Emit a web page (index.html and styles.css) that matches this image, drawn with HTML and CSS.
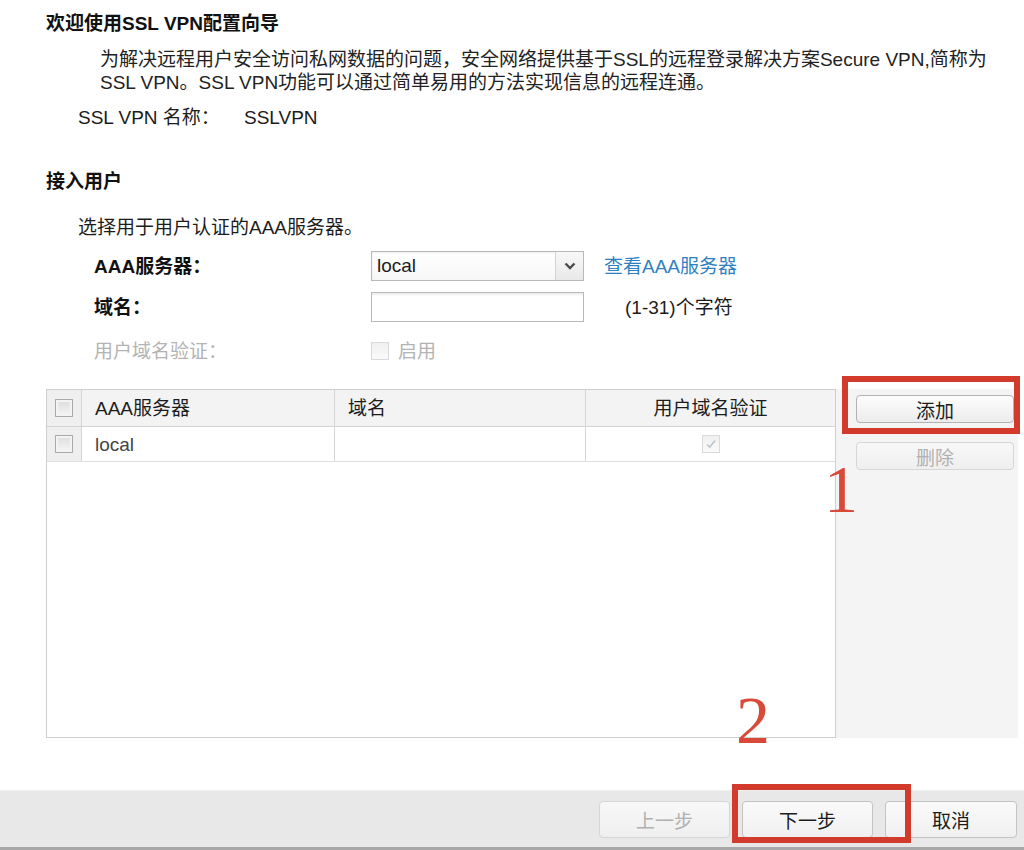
FILE: index.html
```html
<!DOCTYPE html>
<html lang="zh-CN">

<head>
  <meta charset="UTF-8" />
  <meta name="viewport" content="width=device-width, initial-scale=1.0" />
  <title>SSL VPN配置向导</title>
  <link rel="stylesheet" href="styles.css">
</head>

<body>
  <div class="wizard">
    <div class="content">
      <h2 class="heading">欢迎使用SSL VPN配置向导</h2>
      <p class="intro">为解决远程用户安全访问私网数据的问题，安全网络提供基于SSL的远程登录解决方案Secure VPN,简称为<br>SSL VPN。SSL VPN功能可以通过简单易用的方法实现信息的远程连通。</p>
      <div class="name-row">
        <span class="name-label">SSL VPN 名称：</span>
        <span>SSLVPN</span>
      </div>

      <h2 class="heading section">接入用户</h2>
      <p class="hint">选择用于用户认证的AAA服务器。</p>

      <div class="form">
        <label class="form-label">AAA服务器：</label>
        <div class="select">
          <span class="select-value">local</span>
          <span class="select-arrow">
            <svg width="12" height="8" viewBox="0 0 12 8"><path d="M1.5 1.5 L6 6 L10.5 1.5" fill="none" stroke="#4a4a4a" stroke-width="2.4" /></svg>
          </span>
        </div>
        <a class="link" href="#">查看AAA服务器</a>

        <label class="form-label">域名：</label>
        <input class="text-input" type="text" />
        <span class="note">(1-31)个字符</span>

        <label class="form-label disabled">用户域名验证：</label>
        <span class="check-field disabled"><span class="cb cb-light"></span>启用</span>
        <span></span>
      </div>

      <div class="list-area">
        <div class="grid">
          <div class="grid-row grid-head">
            <div class="cell cell-check"><span class="cb"></span></div>
            <div class="cell">AAA服务器</div>
            <div class="cell">域名</div>
            <div class="cell cell-center">用户域名验证</div>
          </div>
          <div class="grid-row grid-data">
            <div class="cell cell-check"><span class="cb"></span></div>
            <div class="cell">local</div>
            <div class="cell"></div>
            <div class="cell cell-center">
              <span class="cb cb-light cb-checked">
                <svg width="12" height="10" viewBox="0 0 12 10"><path d="M2 5.5 L4.8 8 L10 1.5" fill="none" stroke="#b9c3cf" stroke-width="1.6" /></svg>
              </span>
            </div>
          </div>
        </div>

        <div class="side-actions">
          <button class="btn">添加</button>
          <button class="btn" disabled>删除</button>
          <span class="mark-box add-mark"></span>
        </div>

        <span class="mark-num num-1">1</span>
      </div>
    </div>

    <div class="footer">
      <button class="btn btn-lg" disabled>上一步</button>
      <button class="btn btn-lg">下一步</button>
      <button class="btn btn-lg btn-wide">取消</button>
      <span class="mark-box next-mark"></span>
      <span class="mark-num num-2">2</span>
    </div>
  </div>
</body>

</html>
```

FILE: styles.css
```css
/* Base */
* {
  box-sizing: border-box;
  margin: 0;
  padding: 0;
}

body {
  font-family: "Liberation Sans", "Noto Sans CJK SC", sans-serif;
  font-size: 19px;
  line-height: 23px;
  color: #1c1c1c;
  background: #fff;
}

.wizard {
  width: 1024px;
  height: 850px;
  display: flex;
  flex-direction: column;
}

.content {
  padding: 12px 0 0 46px;
}

/* Headings & text */
.heading {
  font-size: 19px;
  line-height: 24px;
  font-weight: 700;
  color: #111;
}

.heading.section {
  margin-top: 41px;
}

.intro {
  margin: 12px 0 0 54px;
  color: #222;
}

.name-row {
  margin: 12px 0 0 32px;
  display: flex;
}

.name-label {
  width: 166px;
}

.hint {
  margin: 22px 0 0 32px;
}

/* Form */
.form {
  margin: 12px 0 0 48px;
  display: grid;
  grid-template-columns: 277px 213px auto;
  grid-template-rows: 30px 30px 36px;
  row-gap: 11px;
  align-items: center;
}

.form-label {
  font-weight: 700;
  color: #111;
}

.form-label.disabled {
  font-weight: 400;
  color: #b3b3b3;
}

.select {
  height: 30px;
  display: flex;
  border: 1px solid #b9b9b9;
  background: linear-gradient(#fff, #f7f7f7);
  box-shadow: inset 0 1px 2px rgba(0, 0, 0, 0.08);
}

.select-value {
  flex: 1;
  padding-left: 5px;
  line-height: 27px;
}

.select-arrow {
  width: 28px;
  display: flex;
  align-items: center;
  justify-content: center;
  border-left: 1px solid #d2d2d2;
  background: linear-gradient(#f8f8f8, #e9e9e9);
}

.link {
  margin-left: 20px;
  color: #2f80c2;
  text-decoration: none;
}

.text-input {
  width: 213px;
  height: 30px;
  border: 1px solid #b9b9b9;
  background: #fff;
  box-shadow: inset 0 2px 2px rgba(0, 0, 0, 0.07);
  outline: none;
}

.note {
  margin-left: 41px;
}

.check-field {
  display: flex;
  align-items: center;
  gap: 9px;
}

.check-field.disabled {
  color: #b3b3b3;
}

/* Checkbox */
.cb {
  display: inline-flex;
  align-items: center;
  justify-content: center;
  width: 18px;
  height: 18px;
  border: 1px solid #a9a9a9;
  background: linear-gradient(#dcdcdc, #f6f6f6);
  box-shadow: inset 0 0 0 2px #f3f3f3;
}

.cb-light {
  border-color: #dadada;
  background: linear-gradient(#f0f0f0, #fafafa);
  box-shadow: none;
}

/* List */
.list-area {
  position: relative;
  margin-top: 20px;
  height: 349px;
  display: flex;
}

.grid {
  width: 790px;
  border: 1px solid #cfcfcf;
  background: #fff;
}

.grid-row {
  display: grid;
  grid-template-columns: 35px 253px 251px 1fr;
}

.grid-head {
  height: 37px;
  background: #f3f3f3;
  border-bottom: 1px solid #d3d3d3;
}

.grid-data {
  height: 35px;
  border-bottom: 1px solid #dedede;
  color: #444;
}

.cell {
  display: flex;
  align-items: center;
  padding-left: 13px;
  border-right: 1px solid #d6d6d6;
}

.cell:last-child {
  border-right: none;
}

.cell-check {
  padding-left: 0;
  justify-content: center;
  background: #efefef;
}

.cell-center {
  padding-left: 0;
  justify-content: center;
}

.side-actions {
  position: relative;
  width: 182px;
  padding: 6px 4px 0 20px;
  background: #f4f4f4;
  display: flex;
  flex-direction: column;
  gap: 19px;
}

/* Buttons */
.btn {
  height: 28px;
  font-family: inherit;
  font-size: 19px;
  color: #1c1c1c;
  border: 1px solid #b3b3b3;
  border-radius: 4px;
  background: linear-gradient(#fdfdfd, #ececec);
}

.btn:disabled {
  color: #b0b0b0;
  border-color: #d6d6d6;
  background: linear-gradient(#f8f8f8, #efefef);
}

.btn-lg {
  width: 131px;
  height: 37px;
  border-color: #c4c4c4;
  background: linear-gradient(#fafafa, #f0f0f0);
}

.btn-wide {
  width: 132px;
}

/* Footer */
.footer {
  position: relative;
  margin-top: auto;
  height: 60px;
  padding: 10px 7px 0 0;
  display: flex;
  justify-content: flex-end;
  gap: 12px;
  background: #e8e8e8;
  border-top: 1px solid #efefef;
  border-bottom: 3px solid #a8a8a8;
}

/* Red annotations */
.mark-box {
  position: absolute;
  border: 6px solid #d23b2b;
}

.add-mark {
  left: 6px;
  top: -13px;
  width: 178px;
  height: 58px;
}

.next-mark {
  left: 732px;
  top: -7px;
  width: 179px;
  height: 59px;
}

.mark-num {
  position: absolute;
  font-family: "Liberation Serif", serif;
  font-size: 68px;
  line-height: 68px;
  color: #d9493a;
}

.num-1 {
  left: 778px;
  top: 66px;
}

.num-2 {
  left: 736px;
  top: -105px;
}
```
